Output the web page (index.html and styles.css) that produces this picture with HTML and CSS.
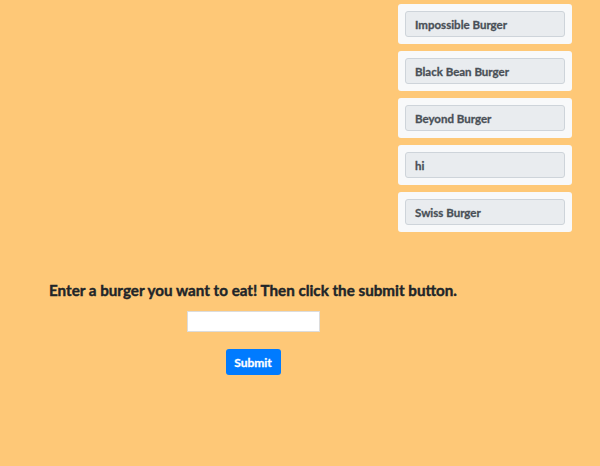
FILE: index.html
```html
<!DOCTYPE html>
<html>
<head>
<meta charset="utf-8">
<link rel="stylesheet" href="styles.css">
</head>
<body>
<div class="top">
  <div class="list">
    <div class="card"><div class="item">Impossible Burger</div></div>
    <div class="card"><div class="item">Black Bean Burger</div></div>
    <div class="card"><div class="item">Beyond Burger</div></div>
    <div class="card"><div class="item">hi</div></div>
    <div class="card"><div class="item">Swiss Burger</div></div>
  </div>
</div>
<div class="form">
  <h3 class="title">Enter a burger you want to eat! Then click the submit button.</h3>
  <input class="field" type="text">
  <button class="btn">Submit</button>
</div>
</body>
</html>
```
FILE: styles.css
```css
html, body {
  margin: 0;
  padding: 0;
  background: #fec877;
  font-family: "Lato", "Open Sans", sans-serif;
  height: 100%;
}
.top {
  display: flex;
  justify-content: flex-end;
  padding: 4px 28px 0 0;
}
.list {
  display: flex;
  flex-direction: column;
  gap: 7px;
  width: 174px;
}
.card {
  background: #f8f9fa;
  border-radius: 3px;
  padding: 7px 7px 6px 7px;
  height: 40px;
  box-sizing: border-box;
}
.item {
  background: #e9ecef;
  border: 1px solid #ced4da;
  border-radius: 3px;
  height: 26px;
  box-sizing: border-box;
  padding: 0 0 0 9px;
  display: flex;
  align-items: center;
  font-size: 11.5px;
  font-weight: 700;
  color: #495057;
  -webkit-text-stroke: 0.3px #495057;
}
.form {
  width: 506px;
  display: flex;
  flex-direction: column;
  align-items: center;
  padding-top: 48px;
}
.title {
  margin: 0;
  font-size: 15.2px;
  font-weight: 700;
  color: #212529;
  line-height: 20px;
  -webkit-text-stroke: 0.4px #212529;
}
.field {
  margin-top: 11px;
  width: 133px;
  height: 21px;
  box-sizing: border-box;
  border: 1px solid #dcdcdc;
  background: #fff;
  padding: 0;
}
.btn {
  margin-top: 17px;
  width: 55px;
  height: 26px;
  background: #007bff;
  color: #fff;
  border: none;
  border-radius: 3px;
  font-family: "Lato", sans-serif;
  font-weight: 700;
  font-size: 12px;
  -webkit-text-stroke: 0.3px #fff;
  padding: 0;
}
```
